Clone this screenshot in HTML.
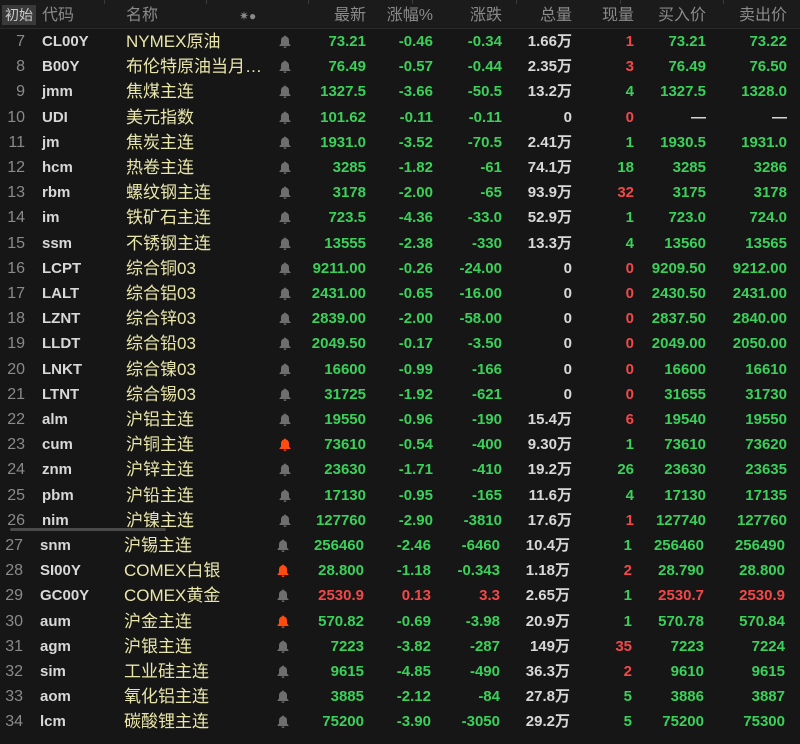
<!DOCTYPE html>
<html><head><meta charset="utf-8"><style>
body{margin:0;width:800px;height:744px;background:#161616;overflow:hidden;font-family:"Liberation Sans","Noto Sans CJK SC",sans-serif;position:relative}
.h{position:absolute;left:0;top:0;width:800px;height:28px;background:#1b1b1b;border-bottom:1px solid #2a2a2a;color:#8a8a8a;font-size:16px}
.h span{position:absolute;top:0;line-height:32px;white-space:nowrap}
.sep{position:absolute;top:0;width:1px;height:4px;background:#3a3a3a}
.r{position:absolute;left:0;width:800px;height:25px;font-size:15px;font-weight:bold}
.r span{position:absolute;top:1px;height:25px;line-height:25px;white-space:nowrap}
.n{right:775px;color:#8a8a8a;font-weight:normal;font-size:16px}
.c{left:42px;color:#d8d8d8}
.m{left:126px;color:#e9e6aa;font-weight:normal;font-size:17px}
.g{color:#3bd05a}.rd{color:#f44848}.w{color:#d8d8d8}
.a1{right:434px}.a2{right:367px}.a3{right:298px}.a4{right:228px}.a5{right:166px}.a6{right:94px}.a7{right:13px}
</style></head><body>
<div class="h">
<span style="left:2px;top:5px;line-height:20px;background:#3a3a3a;color:#ccc;padding:0 3px;font-size:14px">初始</span>
<span style="left:42px">代码</span><span style="left:126px">名称</span>
<span style="left:239px;font-size:12px">✷●</span>
<span style="right:434px">最新</span><span style="right:367px">涨幅%</span><span style="right:298px">涨跌</span><span style="right:228px">总量</span><span style="right:166px">现量</span><span style="right:94px">买入价</span><span style="right:13px">卖出价</span>
<div class="sep" style="left:104px"></div><div class="sep" style="left:206px"></div><div class="sep" style="left:308px"></div><div class="sep" style="left:412px"></div><div class="sep" style="left:516px"></div><div class="sep" style="left:620px"></div><div class="sep" style="left:723px"></div>
</div>
<svg width="0" height="0" style="position:absolute"><defs><symbol id="bell" viewBox="0 0 12 13"><path d="M6 0.5c.7 0 1 .5 1 1 2 .5 3 2 3 4v3l1.5 1.8v.7H.5v-.7L2 8.5v-3c0-2 1-3.5 3-4 0-.5.3-1 1-1zM4.5 11.5h3a1.5 1.5 0 0 1-3 0z"/></symbol></defs></svg>
<div id="rows"></div>
<div style="position:absolute;left:10px;top:528px;width:156px;height:3px;background:#4a4a4a;border-radius:2px;z-index:5"></div>
<script>
var d=[
[7,"CL00Y","NYMEX原油",0,"73.21","-0.46","-0.34","1.66万","1","73.21","73.22"],
[8,"B00Y","布伦特原油当月…",0,"76.49","-0.57","-0.44","2.35万","3","76.49","76.50"],
[9,"jmm","焦煤主连",0,"1327.5","-3.66","-50.5","13.2万","4","1327.5","1328.0"],
[10,"UDI","美元指数",0,"101.62","-0.11","-0.11","0","0","—","—"],
[11,"jm","焦炭主连",0,"1931.0","-3.52","-70.5","2.41万","1","1930.5","1931.0"],
[12,"hcm","热卷主连",0,"3285","-1.82","-61","74.1万","18","3285","3286"],
[13,"rbm","螺纹钢主连",0,"3178","-2.00","-65","93.9万","32","3175","3178"],
[14,"im","铁矿石主连",0,"723.5","-4.36","-33.0","52.9万","1","723.0","724.0"],
[15,"ssm","不锈钢主连",0,"13555","-2.38","-330","13.3万","4","13560","13565"],
[16,"LCPT","综合铜03",0,"9211.00","-0.26","-24.00","0","0","9209.50","9212.00"],
[17,"LALT","综合铝03",0,"2431.00","-0.65","-16.00","0","0","2430.50","2431.00"],
[18,"LZNT","综合锌03",0,"2839.00","-2.00","-58.00","0","0","2837.50","2840.00"],
[19,"LLDT","综合铅03",0,"2049.50","-0.17","-3.50","0","0","2049.00","2050.00"],
[20,"LNKT","综合镍03",0,"16600","-0.99","-166","0","0","16600","16610"],
[21,"LTNT","综合锡03",0,"31725","-1.92","-621","0","0","31655","31730"],
[22,"alm","沪铝主连",0,"19550","-0.96","-190","15.4万","6","19540","19550"],
[23,"cum","沪铜主连",1,"73610","-0.54","-400","9.30万","1","73610","73620"],
[24,"znm","沪锌主连",0,"23630","-1.71","-410","19.2万","26","23630","23635"],
[25,"pbm","沪铅主连",0,"17130","-0.95","-165","11.6万","4","17130","17135"],
[26,"nim","沪镍主连",0,"127760","-2.90","-3810","17.6万","1","127740","127760"],
[27,"snm","沪锡主连",0,"256460","-2.46","-6460","10.4万","1","256460","256490"],
[28,"SI00Y","COMEX白银",1,"28.800","-1.18","-0.343","1.18万","2","28.790","28.800"],
[29,"GC00Y","COMEX黄金",0,"2530.9","0.13","3.3","2.65万","1","2530.7","2530.9"],
[30,"aum","沪金主连",1,"570.82","-0.69","-3.98","20.9万","1","570.78","570.84"],
[31,"agm","沪银主连",0,"7223","-3.82","-287","149万","35","7223","7224"],
[32,"sim","工业硅主连",0,"9615","-4.85","-490","36.3万","2","9610","9615"],
[33,"aom","氧化铝主连",0,"3885","-2.12","-84","27.8万","5","3886","3887"],
[34,"lcm","碳酸锂主连",0,"75200","-3.90","-3050","29.2万","5","75200","75300"]];
var redv={7:1,8:1,10:1,13:1,16:1,17:1,18:1,19:1,20:1,21:1,22:1,26:1,28:1,31:1,32:1};
var h="";
d.forEach(function(r,i){
var y=Math.round(28+i*25.2), pc=r[0]==29?"rd":"g";
var vc=redv[r[0]]?"rd":"g";
h+='<div class="r" style="top:'+y+'px"><div style="position:absolute;left:'+(r[0]>=27?-2:0)+'px;top:0;width:800px;height:25px">'+
'<span class="n">'+r[0]+'</span><span class="c">'+r[1]+'</span><span class="m">'+r[2]+'</span>'+
'<svg style="position:absolute;left:279px;top:7px;fill:'+(r[3]?'#ff4a10':'#6e6e6e')+'" width="12" height="13"><use href="#bell"/></svg>'+
'<span class="a1 '+pc+'">'+r[4]+'</span><span class="a2 '+pc+'">'+r[5]+'</span><span class="a3 '+pc+'">'+r[6]+'</span>'+
'<span class="a4 w">'+r[7]+'</span><span class="a5 '+vc+'">'+r[8]+'</span>'+
'<span class="a6 '+(r[9]=="—"?"w":pc)+'">'+r[9]+'</span><span class="a7 '+(r[10]=="—"?"w":pc)+'">'+r[10]+'</span></div></div>';
});
document.getElementById("rows").innerHTML=h;
</script>
</body></html>
